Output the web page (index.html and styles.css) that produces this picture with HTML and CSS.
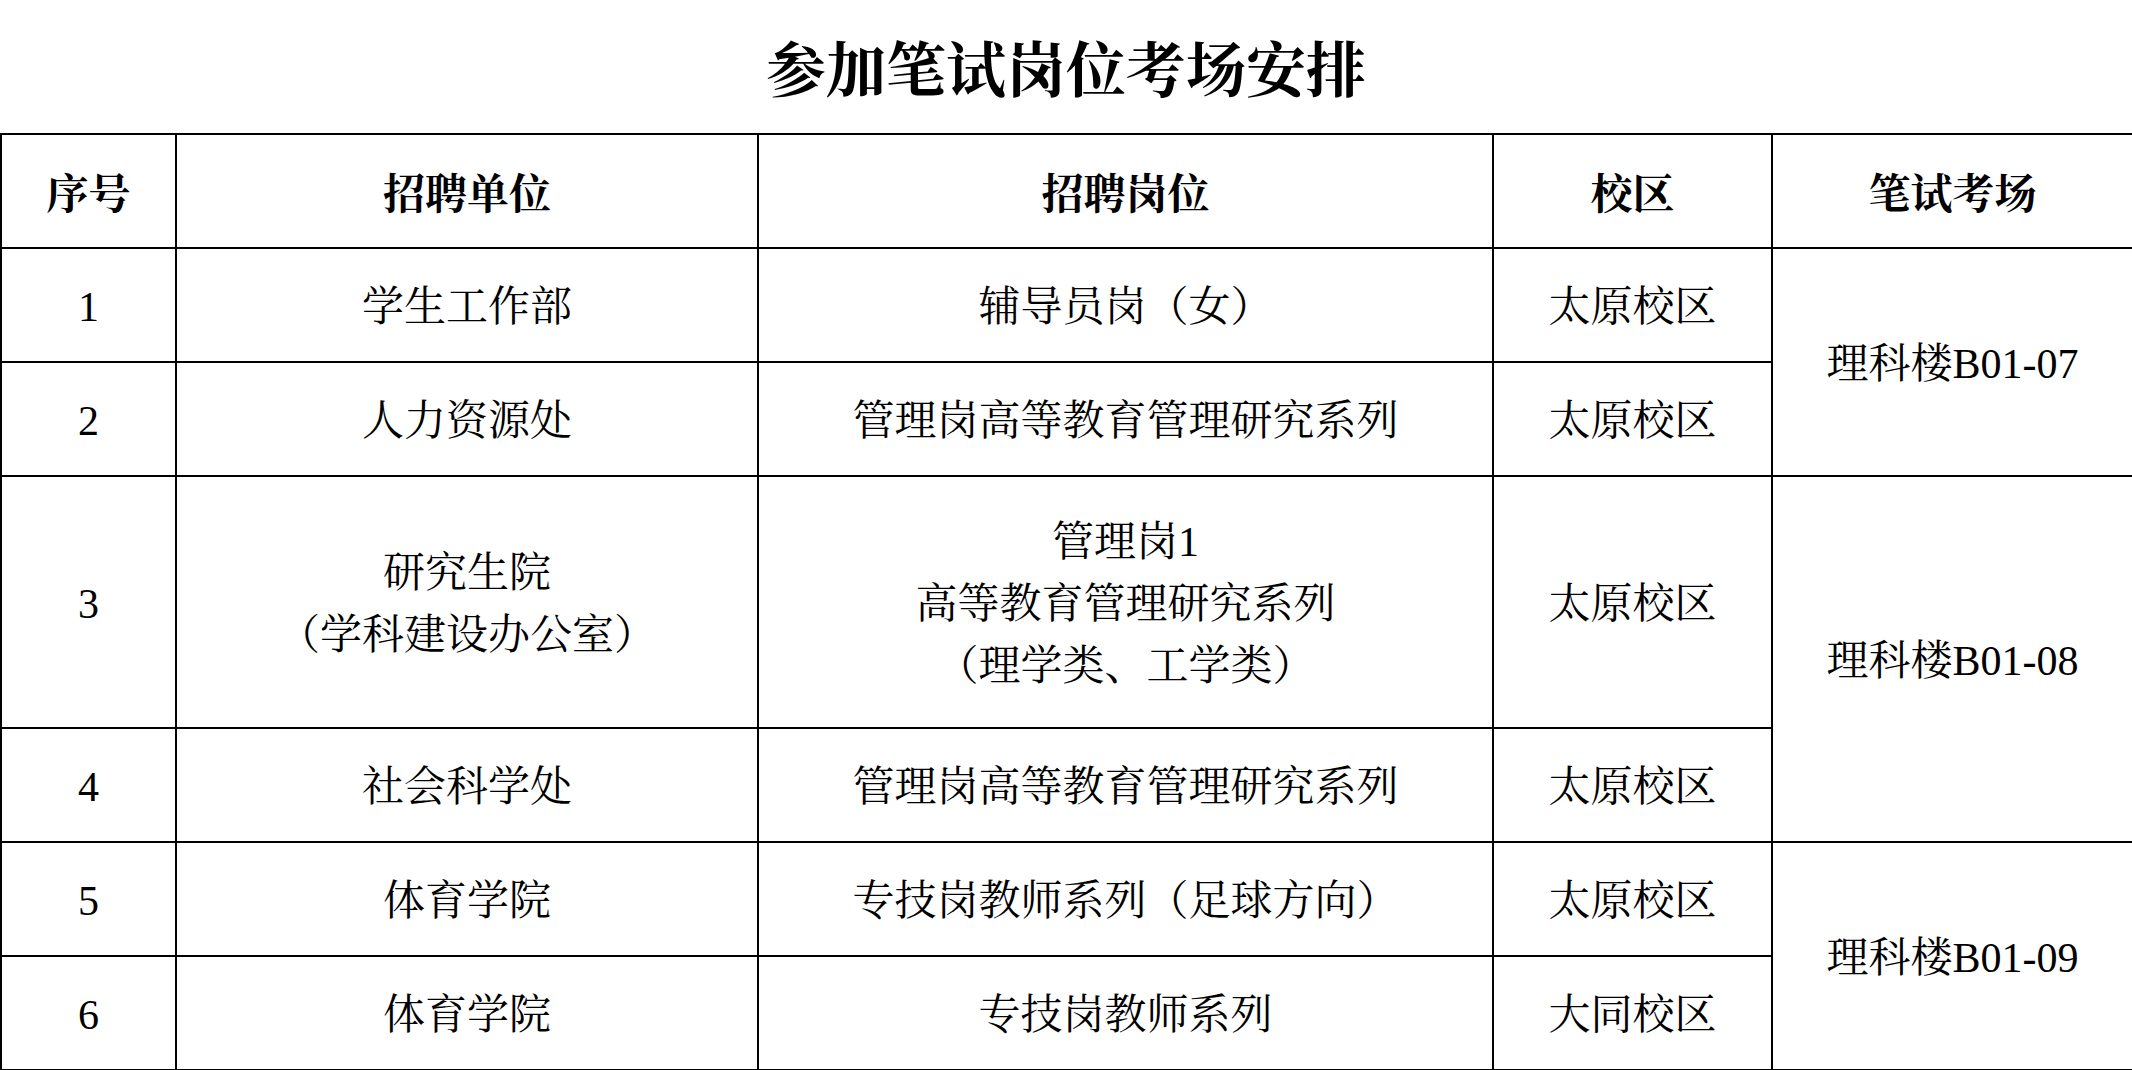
FILE: index.html
```html
<!DOCTYPE html>
<html lang="zh-CN">
<head>
<meta charset="utf-8">
<title>参加笔试岗位考场安排</title>
<link rel="stylesheet" href="styles.css">
</head>
<body>
<h1 class="title">参加笔试岗位考场安排</h1>
<table class="sheet">
  <colgroup>
    <col class="c-no"><col class="c-unit"><col class="c-post"><col class="c-campus"><col class="c-room">
  </colgroup>
  <thead>
    <tr class="row">
      <th>序号</th><th>招聘单位</th><th>招聘岗位</th><th>校区</th><th>笔试考场</th>
    </tr>
  </thead>
  <tbody>
    <tr class="row">
      <td class="num">1</td><td>学生工作部</td><td>辅导员岗（女）</td><td>太原校区</td>
      <td rowspan="2">理科楼<span class="latin">B01-07</span></td>
    </tr>
    <tr class="row">
      <td class="num">2</td><td>人力资源处</td><td>管理岗高等教育管理研究系列</td><td>太原校区</td>
    </tr>
    <tr class="row tall">
      <td class="num">3</td><td>研究生院<br>（学科建设办公室）</td><td>管理岗<span class="latin">1</span><br>高等教育管理研究系列<br>（理学类、工学类）</td><td>太原校区</td>
      <td rowspan="2">理科楼<span class="latin">B01-08</span></td>
    </tr>
    <tr class="row">
      <td class="num">4</td><td>社会科学处</td><td>管理岗高等教育管理研究系列</td><td>太原校区</td>
    </tr>
    <tr class="row">
      <td class="num">5</td><td>体育学院</td><td>专技岗教师系列（足球方向）</td><td>太原校区</td>
      <td rowspan="2">理科楼<span class="latin">B01-09</span></td>
    </tr>
    <tr class="row">
      <td class="num">6</td><td>体育学院</td><td>专技岗教师系列</td><td>大同校区</td>
    </tr>
  </tbody>
</table>
</body>
</html>
```
FILE: styles.css
```css
html, body {
  margin: 0;
  padding: 0;
  background: #ffffff;
}
body {
  font-family: "Liberation Serif", "Noto Serif CJK SC", "Noto Sans CJK SC", serif;
  color: #000000;
}
.title {
  margin: 0;
  height: 133px;
  box-sizing: border-box;
  padding-top: 36px;
  font-size: 60px;
  line-height: 72px;
  font-weight: 700;
  text-align: center;
  letter-spacing: 0;
}
.sheet {
  width: 2132px;
  border-collapse: collapse;
  table-layout: fixed;
}
.c-no { width: 175px; }
.c-unit { width: 582px; }
.c-post { width: 735px; }
.c-campus { width: 279px; }
.c-room { width: 361px; }
.sheet th, .sheet td {
  border: 2px solid #000000;
  padding: 4px 0 0 0;
  text-align: center;
  vertical-align: middle;
  font-size: 42px;
  line-height: 62px;
}
.sheet th {
  font-weight: 700;
  padding-top: 8px;
}
.sheet td {
  font-weight: 400;
}
.latin {
  font-family: "Liberation Serif", serif;
}
.num {
  font-family: "Liberation Serif", serif;
}
.row { height: 114px; }
.row.tall { height: 252px; }
```
